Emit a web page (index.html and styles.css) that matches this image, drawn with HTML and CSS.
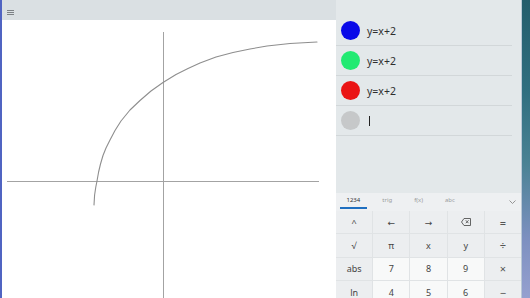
FILE: index.html
```html
<!DOCTYPE html>
<html>
<head>
<meta charset="utf-8">
<link rel="stylesheet" href="styles.css">
</head>
<body>
<div class="app">
  <div class="edge-left"></div>
  <div class="main">
    <div class="titlebar">
      <svg class="menu-icon" width="7" height="5" viewBox="0 0 7 5"><path d="M0 .5H7M0 2.5H7M0 4.5H7" stroke="#7d8286" stroke-width="1"/></svg>
    </div>
    <div class="graph">
      <svg width="334" height="278" viewBox="2 20 334 278">
        <line x1="163.5" y1="32" x2="163.5" y2="298" stroke="#a3a3a3" stroke-width="1"/>
        <line x1="7" y1="181.5" x2="319" y2="181.5" stroke="#a3a3a3" stroke-width="1"/>
        <polyline fill="none" stroke="#8e8e8e" stroke-width="1.1" stroke-linejoin="round" stroke-linecap="round"
          points="94,205 94.6,195 95.8,187 97,181 98.6,172 100.5,164 103,155.5 106,148 110,140 115,130.5 121,121 130,110 140,100.5 151,91 163,82.5 176,74.5 188,68.5 200,63 216,57 233,52.5 250,49 267,46 290,43.5 317,42"/>
      </svg>
    </div>
  </div>
  <div class="panel">
    <div class="eqs">
      <div class="eq"><span class="dot blue"></span><span class="expr">y=x+2</span></div>
      <div class="eq"><span class="dot green"></span><span class="expr">y=x+2</span></div>
      <div class="eq"><span class="dot red"></span><span class="expr">y=x+2</span></div>
      <div class="eq"><span class="dot gray"></span><span class="caret"></span></div>
    </div>
    <div class="keyboard">
      <div class="tabs">
        <span class="tab active">1234</span>
        <span class="tab">trig</span>
        <span class="tab">f(x)</span>
        <span class="tab">abc</span>
        <svg class="chevron" width="7" height="4" viewBox="0 0 7 4"><path d="M.5 .5L3.5 3.5L6.5 .5" fill="none" stroke="#8a8a8a" stroke-width="0.9"/></svg>
      </div>
      <div class="keys">
        <div class="key">^</div>
        <div class="key">←</div>
        <div class="key">→</div>
        <div class="key"><svg width="10" height="8" viewBox="0 0 10 8"><path d="M3 .5H9.5V7.5H3L.5 4Z" fill="none" stroke="#555" stroke-width="0.9"/><path d="M4.8 2.3L7.5 5.2M7.5 2.3L4.8 5.2" stroke="#555" stroke-width="0.9"/></svg></div>
        <div class="key op">=</div>
        <div class="key">√</div>
        <div class="key">π</div>
        <div class="key">x</div>
        <div class="key">y</div>
        <div class="key op">÷</div>
        <div class="key">abs</div>
        <div class="key num">7</div>
        <div class="key num">8</div>
        <div class="key num">9</div>
        <div class="key op">×</div>
        <div class="key">ln</div>
        <div class="key num">4</div>
        <div class="key num">5</div>
        <div class="key num">6</div>
        <div class="key op">−</div>
      </div>
    </div>
  </div>
  <div class="wallpaper"></div>
</div>
</body>
</html>
```

FILE: styles.css
```css
html, body {
  margin: 0;
  padding: 0;
}
body {
  width: 530px;
  height: 298px;
  overflow: hidden;
  font-family: "Noto Sans", "Open Sans", "DejaVu Sans", sans-serif;
  background: #2a6270;
}
.app {
  display: flex;
  width: 530px;
  height: 298px;
}
.edge-left {
  width: 2px;
  flex: none;
  background: #5064c2;
}
.main {
  width: 334px;
  flex: none;
  display: flex;
  flex-direction: column;
}
.titlebar {
  height: 20px;
  flex: none;
  background: #dae0e3;
  display: flex;
  align-items: flex-start;
  padding: 10px 0 0 5px;
  box-sizing: border-box;
}
.menu-icon {
  display: block;
}
.graph {
  flex: 1;
  background: #ffffff;
  overflow: hidden;
}
.graph svg {
  display: block;
}
.panel {
  width: 185px;
  flex: none;
  background: #e3e8ea;
  display: flex;
  flex-direction: column;
  padding-top: 16px;
  box-sizing: border-box;
  overflow: hidden;
}
.eq {
  height: 30px;
  display: flex;
  align-items: center;
  padding-left: 5px;
  margin-right: 9px;
  border-bottom: 1px solid #d2d7d9;
  box-sizing: border-box;
}
.dot {
  width: 19px;
  height: 19px;
  border-radius: 50%;
  flex: none;
}
.dot.blue { background: #0a0ae8; }
.dot.green { background: #22ea72; }
.dot.red { background: #ea1414; }
.dot.gray { background: #c6c8c9; }
.expr {
  margin-left: 7px;
  font-size: 10.5px;
  color: #2e2e2e;
}
.caret {
  margin-left: 9px;
  width: 1px;
  height: 10px;
  background: #222;
}
.keyboard {
  margin-top: auto;
  height: 105px;
  flex: none;
  overflow: hidden;
  display: flex;
  flex-direction: column;
}
.tabs {
  height: 18px;
  flex: none;
  background: #eef0f2;
  display: flex;
  align-items: flex-start;
  padding: 0 0 0 4px;
  gap: 9px;
  box-sizing: border-box;
}
.tab {
  height: 16px;
  padding: 0 6.5px;
  font-size: 6px;
  color: #9a9c9e;
  display: flex;
  align-items: center;
  box-sizing: border-box;
  border-bottom: 2px solid transparent;
}
.tab.active {
  color: #333;
  border-bottom-color: #1f6fc0;
}
.chevron {
  margin: 7px 5px 0 auto;
  display: block;
}
.keys {
  display: grid;
  grid-template-columns: repeat(5, 1fr);
  grid-auto-rows: 22.3px;
  gap: 1px;
  background: #e0e3e5;
  flex: none;
}
.key {
  display: flex;
  align-items: center;
  justify-content: center;
  background: #eceef0;
  font-size: 9px;
  color: #444;
}
.key.num {
  background: #f8f9f9;
}
.key.op {
  font-size: 11px;
  color: #555;
}
.wallpaper {
  width: 9px;
  flex: none;
  box-sizing: border-box;
  border-left: 1px solid #b9c8d6;
  background-color: #2f6a7a;
  background-image: linear-gradient(180deg, #245d6c 0%, #2f6e7f 30%, #4a8294 55%, #7d90c0 80%, #95a0cf 100%);
}
```
